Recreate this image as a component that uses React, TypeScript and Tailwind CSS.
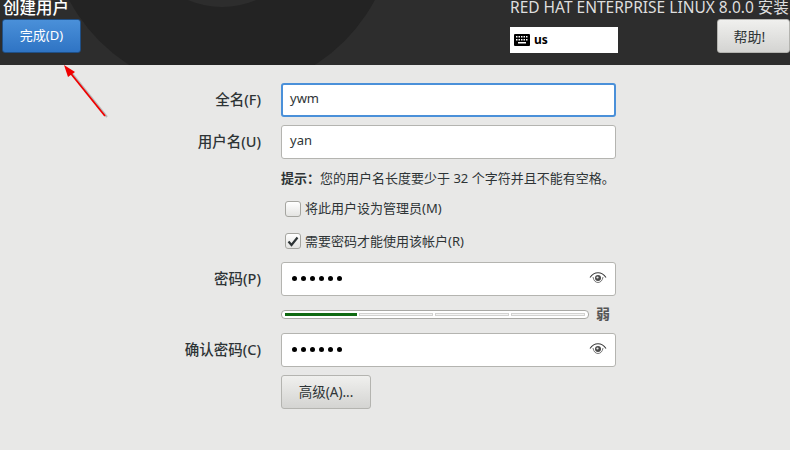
import type { ReactNode } from 'react';

const FONT = 'font-["Noto_Sans","Noto_Sans_CJK_SC",sans-serif]';

function Eye() {
  return (
    <svg width="18" height="14" viewBox="0 0 18 14" fill="none" className="shrink-0">
      <path d="M1 6.500C3.500 3 6 1.800 9 1.800S14.500 3 17 6.500" stroke="#3a3a3a" strokeWidth="1.100" />
      <path d="M4 6C4.500 9.500 6.500 11.500 9 11.500S13.500 9.500 14 6" stroke="#777" strokeWidth="1" />
      <circle cx="9" cy="7" r="3" fill="#4a4a4a" />
      <circle cx="8.500" cy="6.500" r="1.100" fill="#e8e8e8" />
    </svg>
  );
}

function Keyboard() {
  return (
    <svg width="16" height="12" viewBox="0 0 16 12" className="shrink-0">
      <rect width="16" height="12" rx="1" fill="#000" />
      {[2, 4.500, 7, 9.500, 12].map(x => (
        <rect key={x} x={x} y="2" width="1.500" height="1.500" fill="#fff" />
      ))}
      {[2, 4.500, 7, 9.500, 12].map(x => (
        <rect key={x} x={x} y="5" width="1.500" height="1.500" fill="#fff" />
      ))}
      <rect x="4" y="8" width="8" height="1.500" fill="#fff" />
    </svg>
  );
}

function Row({ label, children, className = '' }: { label?: string; children: ReactNode; className?: string }) {
  return (
    <div className={`flex items-center ${className}`}>
      <div className="w-[261px] pb-[1px] text-right text-[14.500px] font-medium text-[#2e3436]">{label}</div>
      <div className="ml-5 w-[335px]">{children}</div>
    </div>
  );
}

function TextBox({ value, focused }: { value: string; focused?: boolean }) {
  return (
    <div
      className={`flex h-[34px] items-center rounded-[3px] bg-white pb-[2px] text-[13px] text-[#2e3436] ${
        focused ? 'border-2 border-[#4a90d9] pl-[7px]' : 'border border-[#b4b4b0] pl-[8px]'
      }`}
    >
      {value}
    </div>
  );
}

function PasswordBox() {
  return (
    <div className="flex h-[34px] items-center justify-between rounded-[3px] border border-[#b4b4b0] bg-white pb-[2px] pl-[10px] pr-[8px]">
      <div className="flex gap-[4px]">
        {[0, 1, 2, 3, 4, 5].map(i => (
          <span key={i} className="h-[5px] w-[5px] rounded-full bg-black" />
        ))}
      </div>
      <Eye />
    </div>
  );
}

function Check({ checked, label }: { checked?: boolean; label: string }) {
  return (
    <div className="flex items-center pl-[4px] text-[13px] text-[#2e3436]">
      <span className="flex h-[16px] w-[16px] items-center justify-center rounded-[3px] border border-[#a5a5a0] bg-gradient-to-b from-white to-[#e4e4e2]">
        {checked && (
          <svg width="12" height="11" viewBox="0 0 12 11">
            <path d="M1.500 5.500 4.500 9 10.500 1.500" fill="none" stroke="#2e3436" strokeWidth="2.200" />
          </svg>
        )}
      </span>
      <span className="ml-[4px]">{label}</span>
    </div>
  );
}

export default function App() {
  return (
    <div className={`relative h-[450px] w-[790px] overflow-hidden bg-[#e8e8e7] ${FONT}`}>
      {/* Header */}
      <div className="relative flex h-[65px] justify-between overflow-hidden bg-[#2d2d2d]">
        <svg width="790" height="65" className="absolute left-0 top-0">
          <circle cx="222" cy="-81" r="173" fill="#232323" />
          <circle cx="222" cy="-81" r="88" fill="#2d2d2d" />
        </svg>
        <div className="relative pl-[2px]">
          <div className="ml-px h-[19px] whitespace-nowrap text-[16.500px] font-medium leading-[15px] text-white">创建用户</div>
          <button className="h-[34px] w-[79px] rounded-[3px] border border-[#1f4f86] bg-gradient-to-b from-[#4a90d9] to-[#2f74c4] text-[13px] text-white">
            完成(D)
          </button>
        </div>
        <div className="relative flex w-[280px] flex-col">
          <div className="h-[16px] whitespace-nowrap text-[15.500px] leading-[15px] text-[#dedede]">
            RED HAT ENTERPRISE LINUX 8.0.0 安装
          </div>
          <div className="mt-[11px] flex items-start justify-between">
            <div className="flex h-[26px] w-[108px] items-center bg-white pl-[4px] text-[12px] font-bold text-black">
              <Keyboard />
              <span className="ml-[4px]">us</span>
            </div>
            <button className="-mt-[8px] h-[34px] w-[73px] rounded-[3px] border border-[#b4b4b0] bg-gradient-to-b from-[#f0f0ee] to-[#d4d4d2] pr-2 text-[14px] text-[#2e3436]">
              帮助!
            </button>
          </div>
        </div>
      </div>

      {/* Form */}
      <div className="flex flex-col pt-[18px]">
        <Row label="全名(F)"><TextBox value="ywm" focused /></Row>
        <Row label="用户名(U)" className="mt-2"><TextBox value="yan" /></Row>
        <Row className="mt-[9px]">
          <div className="text-[13px] leading-[20px] text-[#2e3436]">
            <span className="font-bold">提示：</span>您的用户名长度要少于 32 个字符并且不能有空格。
          </div>
        </Row>
        <Row className="mt-[11px]"><Check label="将此用户设为管理员(M)" /></Row>
        <Row className="mt-[13px]"><Check checked label="需要密码才能使用该帐户(R)" /></Row>
        <Row label="密码(P)" className="mt-[11px]"><PasswordBox /></Row>
        <Row className="mt-[11px]">
          <div className="flex items-center">
            <div className="flex h-[9px] w-[308px] gap-[2px] rounded-[4px] border border-[#a8a8a4] bg-white px-[3px] py-[2px]">
              <div className="flex-1 bg-[#0f6a12]" />
              <div className="flex-1 border border-[#d2d2d0] bg-[#f4f4f4]" />
              <div className="flex-1 border border-[#d2d2d0] bg-[#f4f4f4]" />
              <div className="flex-1 border border-[#d2d2d0] bg-[#f4f4f4]" />
            </div>
            <span className="ml-[7px] text-[14px] font-bold leading-[14px] text-[#555]">弱</span>
          </div>
        </Row>
        <Row label="确认密码(C)" className="mt-3"><PasswordBox /></Row>
        <Row className="mt-2">
          <button className="h-[34px] w-[90px] rounded-[3px] border border-[#b4b4b0] bg-gradient-to-b from-[#f0f0ee] to-[#d4d4d2] text-[13.500px] text-[#2e3436]">
            高级(A)...
          </button>
        </Row>
      </div>

      {/* Annotation arrow */}
      <svg width="60" height="60" viewBox="0 0 60 60" className="absolute left-[60px] top-[60px]">
        <path d="M47 57 10 11" stroke="#999" strokeWidth="2" opacity="0.6" />
        <path d="M45 56 8 10" stroke="#f00000" strokeWidth="1.800" />
        <path d="M4 5 15 12 8 17Z" fill="#f00000" />
      </svg>
    </div>
  );
}
